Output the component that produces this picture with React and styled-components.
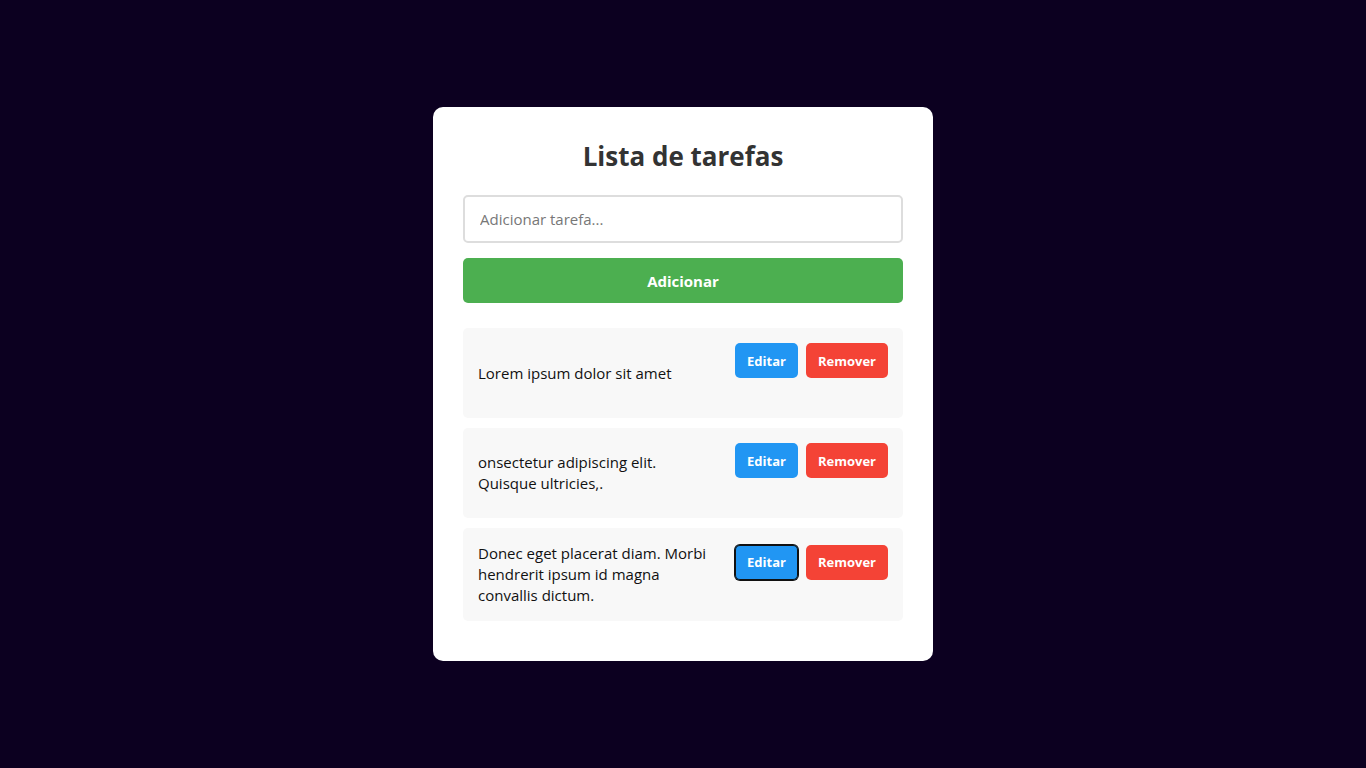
import React, { useState } from 'react'
import styled, { createGlobalStyle, css } from 'styled-components'

const GlobalStyle = createGlobalStyle`
  * {
    box-sizing: border-box;
  }

  body {
    margin: 0;
    background-color: #0c0020;
    font-family: 'Open Sans', 'Noto Sans', sans-serif;
  }
`

const Page = styled.div`
  display: flex;
  align-items: center;
  justify-content: center;
  min-height: 100vh;
`

const Card = styled.div`
  width: 500px;
  padding: 30px;
  background-color: #fff;
  border-radius: 10px;
`

const Title = styled.h1`
  margin: 0 0 20px;
  font-size: 26px;
  line-height: 38px;
  font-weight: 700;
  text-align: center;
  color: #333;
`

const Input = styled.input`
  display: block;
  width: 100%;
  height: 48px;
  padding: 0 15px;
  border: 2px solid #ddd;
  border-radius: 5px;
  font-family: inherit;
  font-size: 15px;
  color: #333;
  outline: none;

  &::placeholder {
    color: #777;
  }
`

const AddButton = styled.button`
  display: block;
  width: 100%;
  height: 45px;
  margin-top: 15px;
  border: none;
  border-radius: 5px;
  background-color: #4caf50;
  color: #fff;
  font-family: inherit;
  font-size: 15px;
  font-weight: 700;
  cursor: pointer;
`

const List = styled.ul`
  list-style: none;
  margin: 25px 0 0;
  padding: 0;
`

const Item = styled.li`
  display: flex;
  align-items: center;
  justify-content: space-between;
  gap: 15px;
  margin-bottom: 10px;
  padding: 15px;
  background-color: #f8f8f8;
  border-radius: 5px;
`

const Text = styled.span`
  flex: 0 1 232px;
  font-size: 15px;
  line-height: 21px;
  color: #111;
`

const Actions = styled.div`
  display: flex;
  align-items: flex-start;
  gap: 8px;
  height: 60px;
`

const ActionButton = styled.button`
  height: 35px;
  padding: 0 12px;
  border: none;
  border-radius: 5px;
  background-color: ${(props) => (props.$variant === 'edit' ? '#2196f3' : '#f44336')};
  color: #fff;
  font-family: inherit;
  font-size: 13px;
  font-weight: 700;
  cursor: pointer;

  ${(props) =>
    props.$focused &&
    css`
      box-shadow: 0 0 0 1px #111, inset 0 0 0 1px #111;
    `}
`

const initialTasks = [
  'Lorem ipsum dolor sit amet',
  'onsectetur adipiscing elit. Quisque ultricies,.',
  'Donec eget placerat diam. Morbi hendrerit ipsum id magna convallis dictum.',
]

const App = () => {
  const [tasks] = useState(initialTasks)

  return (
    <Page>
      <GlobalStyle />
      <Card>
        <Title>Lista de tarefas</Title>
        <Input placeholder="Adicionar tarefa..." />
        <AddButton>Adicionar</AddButton>
        <List>
          {tasks.map((task, i) => (
            <Item key={i}>
              <Text>{task}</Text>
              <Actions>
                <ActionButton $variant="edit" $focused={i === 2}>
                  Editar
                </ActionButton>
                <ActionButton $variant="remove">Remover</ActionButton>
              </Actions>
            </Item>
          ))}
        </List>
      </Card>
    </Page>
  )
}

export default App
